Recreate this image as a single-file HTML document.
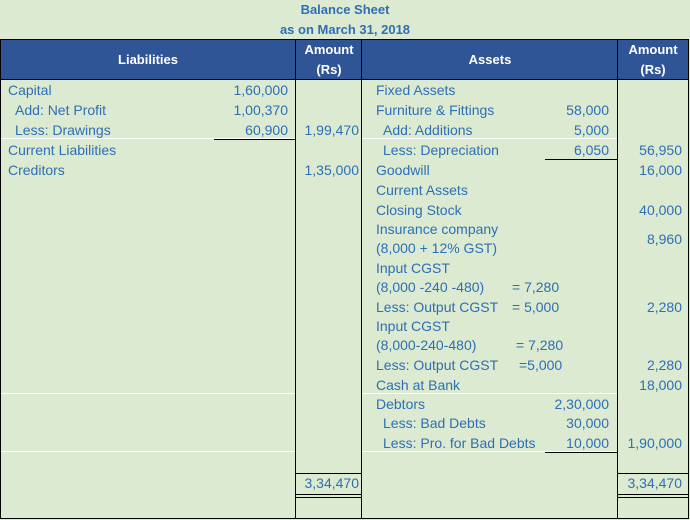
<!DOCTYPE html><html><head><style>
body{margin:0;width:690px;height:520px;background:#dbead0;position:relative;overflow:hidden;font-family:"Liberation Sans",sans-serif;font-size:14px;color:#2e6fb5}
div{position:absolute}
.t{height:18px;line-height:18px;white-space:nowrap}
.r{text-align:right}
.v{background:#000;width:1px}
.h{background:#000;height:1px}
.w{background:#fff;height:1px}
.hd{color:#fff;font-weight:bold;text-align:center;font-size:13px}
.ti{font-weight:bold;color:#2e6fb5;text-align:center;width:690px;left:0;font-size:13px}
</style></head><body>
<div class="t ti" style="top:1px">Balance Sheet</div>
<div class="t ti" style="top:21px">as on March 31, 2018</div>
<div style="left:0;top:39px;width:689px;height:41px;background:#2f5597"></div>
<div class="t hd" style="left:0;width:296px;top:51px">Liabilities</div>
<div class="t hd" style="left:296px;width:66px;top:41px">Amount</div>
<div class="t hd" style="left:296px;width:66px;top:61px">(Rs)</div>
<div class="t hd" style="left:362px;width:256px;top:51px">Assets</div>
<div class="t hd" style="left:618px;width:70px;top:41px">Amount</div>
<div class="t hd" style="left:618px;width:70px;top:61px">(Rs)</div>
<div class="h" style="left:0;top:39px;width:689px"></div>
<div class="h" style="left:0;top:79px;width:689px"></div>
<div class="h" style="left:0;top:518px;width:689px"></div>
<div class="v" style="left:0;top:39px;height:480px"></div>
<div class="v" style="left:688px;top:39px;height:480px"></div>
<div class="v" style="left:295px;top:39px;height:480px"></div>
<div class="v" style="left:361px;top:39px;height:480px"></div>
<div class="v" style="left:617px;top:39px;height:480px"></div>
<div class="w" style="left:1px;top:138px;width:294px"></div>
<div class="w" style="left:362px;top:138px;width:255px"></div>
<div class="w" style="left:1px;top:393px;width:294px"></div>
<div class="w" style="left:362px;top:393px;width:255px"></div>
<div class="w" style="left:1px;top:451px;width:294px"></div>
<div class="w" style="left:362px;top:451px;width:255px"></div>
<div class="h" style="left:214px;top:139px;width:82px"></div>
<div class="h" style="left:545px;top:159px;width:73px"></div>
<div class="h" style="left:545px;top:452px;width:73px"></div>
<div class="h" style="left:296px;top:473px;width:66px"></div>
<div class="h" style="left:296px;top:494px;width:66px"></div>
<div class="h" style="left:296px;top:497px;width:66px"></div>
<div class="h" style="left:618px;top:473px;width:70px"></div>
<div class="h" style="left:618px;top:494px;width:70px"></div>
<div class="h" style="left:618px;top:497px;width:70px"></div>
<div class="t" style="left:8px;top:81px">Capital</div>
<div class="t" style="left:15px;top:101px">Add: Net Profit</div>
<div class="t" style="left:15px;top:121px">Less: Drawings</div>
<div class="t" style="left:8px;top:141px">Current Liabilities</div>
<div class="t" style="left:8px;top:161px">Creditors</div>
<div class="t r" style="right:402px;top:81px">1,60,000</div>
<div class="t r" style="right:402px;top:101px">1,00,370</div>
<div class="t r" style="right:402px;top:121px">60,900</div>
<div class="t r" style="right:331px;top:121px">1,99,470</div>
<div class="t r" style="right:331px;top:161px">1,35,000</div>
<div class="t r" style="right:331px;top:474px">3,34,470</div>
<div class="t" style="left:376px;top:81px">Fixed Assets</div>
<div class="t" style="left:376px;top:101px">Furniture &amp; Fittings</div>
<div class="t" style="left:383px;top:121px">Add: Additions</div>
<div class="t" style="left:383px;top:141px">Less: Depreciation</div>
<div class="t" style="left:376px;top:161px">Goodwill</div>
<div class="t" style="left:376px;top:181px">Current Assets</div>
<div class="t" style="left:376px;top:201px">Closing Stock</div>
<div class="t" style="left:376px;top:220px">Insurance company</div>
<div class="t" style="left:376px;top:239px">(8,000 + 12% GST)</div>
<div class="t" style="left:376px;top:259px">Input CGST</div>
<div class="t" style="left:376px;top:278px">(8,000 -240 -480)</div>
<div class="t" style="left:512px;top:278px">= 7,280</div>
<div class="t" style="left:376px;top:298px">Less: Output CGST</div>
<div class="t" style="left:512px;top:298px">= 5,000</div>
<div class="t" style="left:376px;top:317px">Input CGST</div>
<div class="t" style="left:376px;top:336px">(8,000-240-480)</div>
<div class="t" style="left:516px;top:336px">= 7,280</div>
<div class="t" style="left:376px;top:356px">Less: Output CGST</div>
<div class="t" style="left:519px;top:356px">=5,000</div>
<div class="t" style="left:376px;top:376px">Cash at Bank</div>
<div class="t" style="left:376px;top:395px">Debtors</div>
<div class="t" style="left:383px;top:414px">Less: Bad Debts</div>
<div class="t" style="left:383px;top:434px">Less: Pro. for Bad Debts</div>
<div class="t r" style="right:81px;top:101px">58,000</div>
<div class="t r" style="right:81px;top:121px">5,000</div>
<div class="t r" style="right:81px;top:141px">6,050</div>
<div class="t r" style="right:81px;top:395px">2,30,000</div>
<div class="t r" style="right:81px;top:414px">30,000</div>
<div class="t r" style="right:81px;top:434px">10,000</div>
<div class="t r" style="right:8px;top:141px">56,950</div>
<div class="t r" style="right:8px;top:161px">16,000</div>
<div class="t r" style="right:8px;top:201px">40,000</div>
<div class="t r" style="right:8px;top:230px">8,960</div>
<div class="t r" style="right:8px;top:298px">2,280</div>
<div class="t r" style="right:8px;top:356px">2,280</div>
<div class="t r" style="right:8px;top:376px">18,000</div>
<div class="t r" style="right:8px;top:434px">1,90,000</div>
<div class="t r" style="right:8px;top:474px">3,34,470</div>
</body></html>
